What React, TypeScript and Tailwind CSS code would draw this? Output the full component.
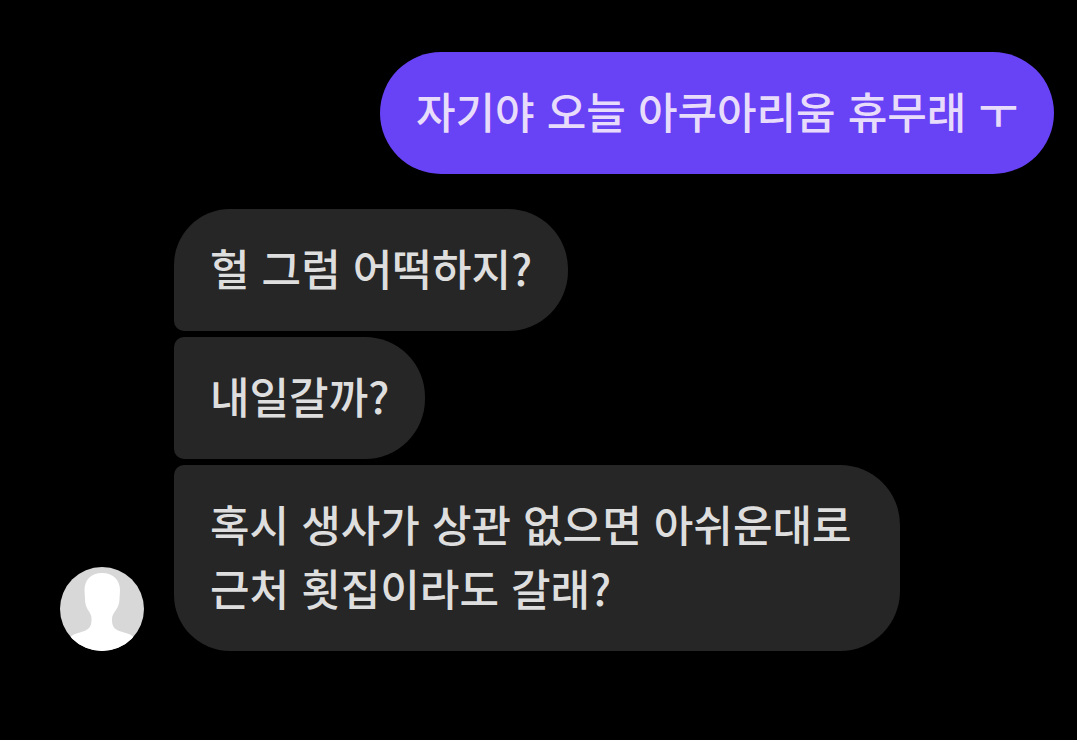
type Message = {
  id: number;
  text: string;
};

const received: Message[] = [
  { id: 1, text: "헐 그럼 어떡하지?" },
  { id: 2, text: "내일갈까?" },
  { id: 3, text: "혹시 생사가 상관 없으면 아쉬운대로 근처 횟집이라도 갈래?" },
];

export default function App() {
  return (
    <main
      lang="ko"
      className="flex min-h-screen flex-col gap-[35px] bg-black pt-[52px] pr-[23px] pb-[89px] pl-[60px] font-['Noto_Sans_CJK_KR',sans-serif] text-[43px] leading-[64px] font-medium break-keep"
    >
      <p className="max-w-[726px] self-end rounded-[61px] bg-[#6842f5] px-9 pt-[26px] pb-8 text-[#e8dcfb]">
        자기야 오늘 아쿠아리움 휴무래 ㅜ
      </p>

      <section className="flex items-end gap-[30px]">
        <Avatar />
        <div className="flex min-w-0 flex-col items-start gap-1.5">
          {received.map((m, i) => (
            <Bubble key={m.id} text={m.text} first={i === 0} last={i === received.length - 1} />
          ))}
        </div>
      </section>
    </main>
  );
}

function Bubble({ text, first, last }: { text: string; first: boolean; last: boolean }) {
  // Only the outer left corners of a group are fully rounded.
  const top = first ? "rounded-tl-[56px]" : "rounded-tl-[10px]";
  const bottom = last ? "rounded-bl-[56px]" : "rounded-bl-[10px]";

  return (
    <p
      className={`max-w-[726px] rounded-r-[60px] bg-[#262626] px-9 pt-[26px] pb-8 text-[#dedede] ${top} ${bottom}`}
    >
      {text}
    </p>
  );
}

function Avatar() {
  return (
    <svg
      viewBox="0 0 84 84"
      role="img"
      aria-label="프로필"
      className="size-[84px] shrink-0 overflow-hidden rounded-full bg-[#d8d8d8]"
    >
      <path
        d="M42 6c-11 0-17.500 7-17.500 17 0 3 .5 6 .5 9 0 4 1 8 3 11 2 3 3.500 5 3.500 9 0 6-1 9-6 11.500C21 65.500 15 66 10 70v14h64V70c-5-4-11-4.500-16-6.500C53 61 52 58 52 52c0-4 2-6 4-9s3.500-7 3.500-11c0-3 .5-6 .5-9C60 13 53 6 42 6Z"
        fill="#fff"
      />
    </svg>
  );
}
